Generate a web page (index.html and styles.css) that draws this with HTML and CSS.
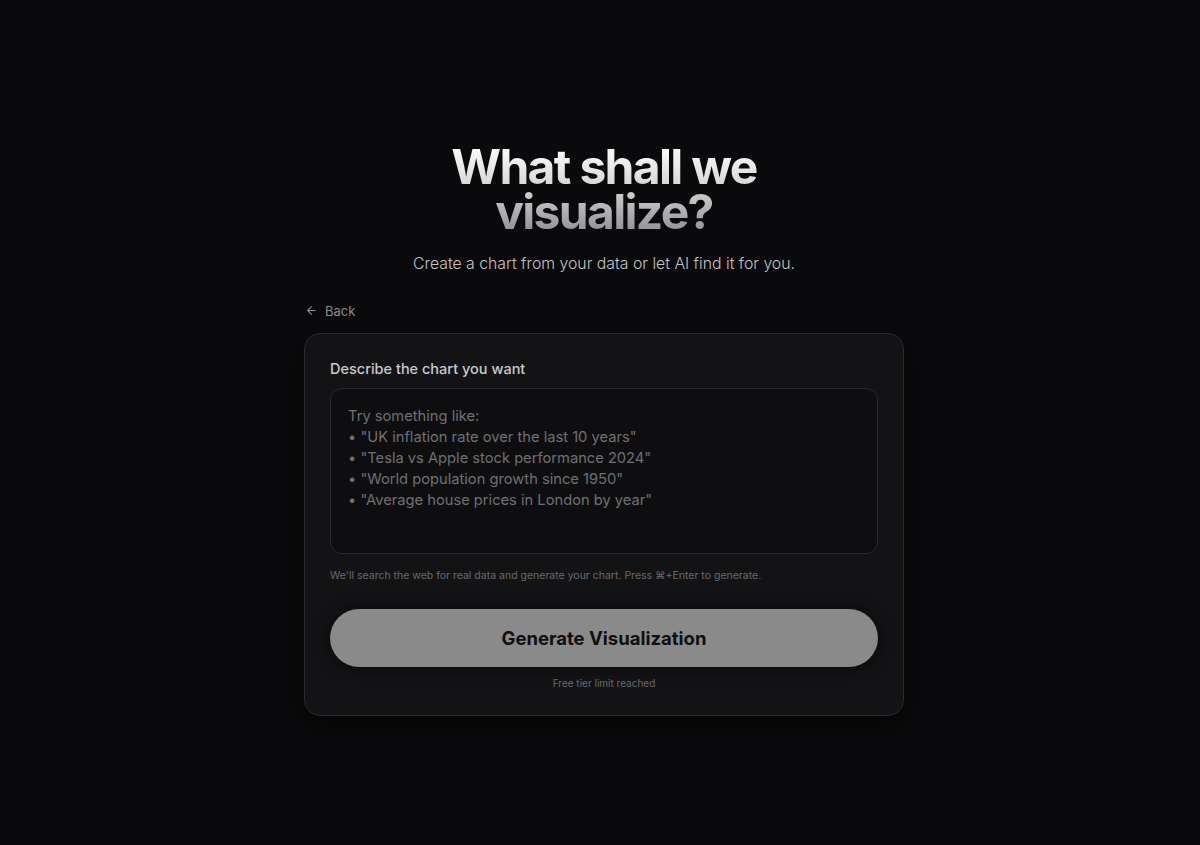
FILE: index.html
```html
<!DOCTYPE html>
<html lang="en">
<head>
<meta charset="utf-8">
<title>What shall we visualize?</title>
<link rel="stylesheet" href="styles.css">
</head>
<body>
<main class="page">
  <header class="hero">
    <h1 class="title">What shall we<br>visualize?</h1>
    <p class="subtitle">Create a chart from your data or let AI find it for you.</p>
  </header>
  <section class="panel">
    <a class="back" href="#">
      <svg class="back-icon" viewBox="0 0 24 24" width="13" height="13" fill="none" stroke="currentColor" stroke-width="2" stroke-linecap="round" stroke-linejoin="round"><path d="M19 12H5"/><path d="M12 19l-7-7 7-7"/></svg>
      <span>Back</span>
    </a>
    <div class="card">
      <label class="label" for="prompt">Describe the chart you want</label>
      <textarea id="prompt" class="input" placeholder="Try something like:
• &quot;UK inflation rate over the last 10 years&quot;
• &quot;Tesla vs Apple stock performance 2024&quot;
• &quot;World population growth since 1950&quot;
• &quot;Average house prices in London by year&quot;"></textarea>
      <p class="hint">We'll search the web for real data and generate your chart. Press ⌘+Enter to generate.</p>
      <button class="generate" type="button">Generate Visualization</button>
      <p class="limit">Free tier limit reached</p>
    </div>
  </section>
</main>
</body>
</html>
```
FILE: styles.css
```css
* { box-sizing: border-box; }
html, body { margin: 0; padding: 0; }
body {
  background: #0a0a0c;
  font-family: Inter, "Noto Sans", sans-serif;
  color: #ddd;
  min-height: 845px;
}
.page {
  display: flex;
  flex-direction: column;
  align-items: center;
  padding-top: 144px;
  padding-left: 8px;
}
.hero { text-align: center; }
.title {
  margin: 0;
  font-size: 48px;
  font-weight: 700;
  line-height: 45px;
  letter-spacing: -0.035em;
  background: linear-gradient(180deg, #ffffff 0%, #d8d8d8 45%, #8e8e92 100%);
  -webkit-background-clip: text;
  background-clip: text;
  color: transparent;
}
.subtitle {
  margin: 19px 0 0;
  font-size: 15.8px;
  font-weight: 300;
  color: #c4c4c6;
  line-height: 22px;
}
.panel {
  width: 600px;
  margin-top: 26px;
}
.back {
  display: inline-flex;
  align-items: center;
  gap: 7px;
  color: #8a8a8e;
  font-size: 13px;
  text-decoration: none;
  line-height: 18px;
  margin-left: 1px;
}
.back-icon { display: block; }
.card {
  margin-top: 12px;
  background: #131316;
  border: 1px solid #2b2b2f;
  border-radius: 16px;
  padding: 26px 25px 25px;
  display: flex;
  flex-direction: column;
  box-shadow: 0 10px 30px rgba(0,0,0,0.5);
}
.label {
  font-size: 14.5px;
  font-weight: 500;
  color: #cacacd;
  line-height: 18px;
}
.input {
  margin-top: 10px;
  height: 166px;
  resize: none;
  background: #0e0e10;
  border: 1px solid #29292d;
  border-radius: 12px;
  padding: 17px 17px;
  font-family: Inter, "Noto Sans", sans-serif;
  font-size: 14.7px;
  line-height: 21px;
  color: #ddd;
  outline: none;
}
.input::placeholder { color: #707074; }
.hint {
  margin: 15px 0 0;
  font-size: 10.5px;
  color: #69696d;
  line-height: 14px;
}
.generate {
  margin-top: 26px;
  height: 58px;
  border: none;
  border-radius: 29px;
  background: #8a8a8b;
  color: #0f0f11;
  font-family: Inter, "Noto Sans", sans-serif;
  font-size: 18.5px;
  font-weight: 700;
  box-shadow: 0 0 16px rgba(0,0,0,0.6);
  cursor: pointer;
}
.limit {
  margin: 9px 0 0;
  text-align: center;
  font-size: 10px;
  color: #6a6a6e;
  line-height: 14px;
}
```
